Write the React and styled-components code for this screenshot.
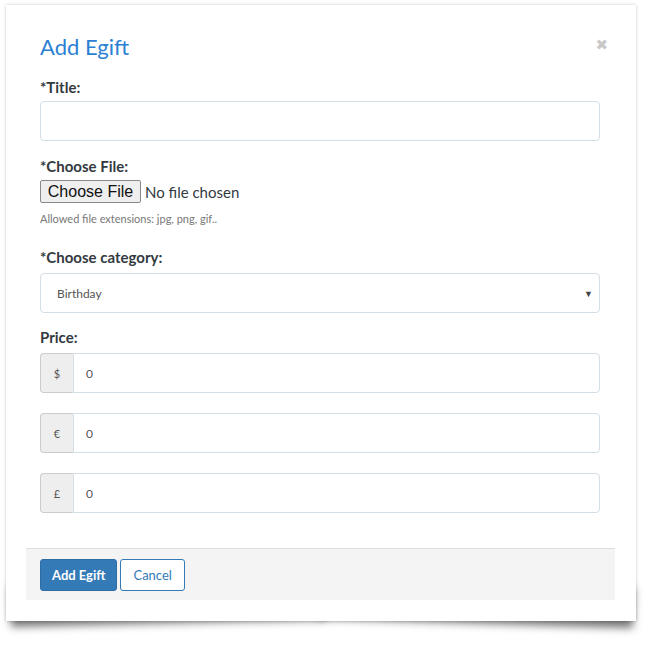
import React from "react";
import styled, { createGlobalStyle } from "styled-components";

const GlobalStyle = createGlobalStyle`
  html, body {
    margin: 0;
    padding: 0;
    background: #ffffff;
  }
  body {
    font-family: Lato, "Open Sans", "Noto Sans", sans-serif;
    color: #333a3f;
  }
  * {
    box-sizing: border-box;
  }
`;

const Page = styled.div`
  padding: 5px 0 0 6px;
  width: 650px;
  height: 651px;
  isolation: isolate;
`;

const Card = styled.div`
  position: relative;
  width: 630px;
  height: 616px;
  background: #ffffff;
  padding: 20px 21px 21px 20px;
  box-shadow: 0 0 3px rgba(0, 0, 0, 0.22);

  /* curled paper shadow under the card */
  &::before,
  &::after {
    content: "";
    position: absolute;
    z-index: -1;
    bottom: 14px;
    width: 50%;
    height: 40px;
    box-shadow: 0 16px 9px rgba(0, 0, 0, 0.55);
  }
  &::before {
    left: 4px;
    transform: rotate(-1.4deg);
  }
  &::after {
    right: 2px;
    transform: rotate(1.8deg);
  }
`;

const Dialog = styled.div`
  display: flex;
  flex-direction: column;
  height: 100%;
`;

const Header = styled.div`
  display: flex;
  justify-content: space-between;
  align-items: flex-start;
  padding: 10px 7px 0 14px;
`;

const Title = styled.h4`
  margin: 0;
  font-size: 22px;
  line-height: 24px;
  font-weight: 400;
  color: #2b80d2;
`;

const Close = styled.span`
  margin-top: 3px;
  font-family: "DejaVu Sans", sans-serif;
  font-size: 15px;
  line-height: 14px;
  font-weight: 700;
  color: #c8c8c8;
`;

const Body = styled.div`
  flex: 1;
  padding: 18px 15px 0 14px;
`;

const Group = styled.div`
  margin-bottom: ${({ $mb }) => $mb ?? 15}px;
`;

const Label = styled.label`
  display: block;
  font-size: 15px;
  line-height: 20px;
  font-weight: 700;
  color: #333a3f;
  margin-bottom: ${({ $gap }) => $gap ?? 4}px;
`;

const TextInput = styled.input`
  display: block;
  width: 100%;
  height: 40px;
  border: 1px solid #d3dfe4;
  border-radius: 4px;
  padding: 0 16px;
  font-family: inherit;
  font-size: 12px;
  color: #555;
  background: #fff;
  outline: none;
`;

const FileRow = styled.div`
  display: flex;
  align-items: center;
  gap: 4px;
  margin-top: 1px;
`;

const FileButton = styled.button`
  height: 23px;
  width: 101px;
  padding: 0;
  border: 1px solid #8a8a8a;
  border-radius: 2px;
  background: #efefef;
  font-family: "Liberation Sans", Arial, sans-serif;
  font-size: 16px;
  line-height: 21px;
  color: #111;
`;

const FileText = styled.span`
  font-size: 15px;
  color: #333a3f;
`;

const Help = styled.p`
  margin: 9px 0 0;
  font-size: 11px;
  line-height: 14px;
  color: #777;
`;

const SelectBox = styled.div`
  display: flex;
  align-items: center;
  justify-content: space-between;
  height: 40px;
  border: 1px solid #d3dfe4;
  border-radius: 4px;
  padding: 0 6px 0 16px;
  font-size: 12px;
  color: #555;
`;

const Caret = styled.span`
  font-size: 9px;
  color: #444;
  margin-top: 1px;
`;

const InputGroup = styled.div`
  display: flex;
  height: 40px;
  margin-bottom: ${({ $last }) => ($last ? 0 : 20)}px;
`;

const Addon = styled.span`
  width: 33px;
  display: flex;
  align-items: center;
  justify-content: center;
  background: #eeeeee;
  border: 1px solid #cccccc;
  border-right: none;
  border-radius: 4px 0 0 4px;
  font-size: 11px;
  color: #555;
`;

const GroupInput = styled(TextInput)`
  flex: 1;
  border-radius: 0 4px 4px 0;
  padding: 0 12px;
`;

const Footer = styled.div`
  display: flex;
  gap: 3px;
  padding: 10px 14px 9px;
  background: #f4f4f4;
  border-top: 1px solid #dddddd;
`;

const Button = styled.button`
  height: 32px;
  padding: 0 ${({ $primary }) => ($primary ? 11 : 12)}px;
  border-radius: 3px;
  font-family: inherit;
  font-size: 13px;
  font-weight: ${({ $primary }) => ($primary ? 700 : 400)};
  color: ${({ $primary }) => ($primary ? "#fff" : "#337ab7")};
  background: ${({ $primary }) => ($primary ? "#337ab7" : "#fff")};
  border: 1px solid ${({ $primary }) => ($primary ? "#2e6da4" : "#337ab7")};
`;

const prices = ["$", "€", "£"];

const App = () => {
  return (
    <Page>
      <GlobalStyle />
      <Card>
        <Dialog>
          <Header>
            <Title>Add Egift</Title>
            <Close>✖</Close>
          </Header>
          <Body>
            <Group>
              <Label>*Title:</Label>
              <TextInput type="text" defaultValue="" />
            </Group>
            <Group $mb={21}>
              <Label>*Choose File:</Label>
              <FileRow>
                <FileButton>Choose File</FileButton>
                <FileText>No file chosen</FileText>
              </FileRow>
              <Help>Allowed file extensions: jpg, png, gif..</Help>
            </Group>
            <Group $mb={14}>
              <Label $gap={6}>*Choose category:</Label>
              <SelectBox>
                <span>Birthday</span>
                <Caret>▼</Caret>
              </SelectBox>
            </Group>
            <Group>
              <Label $gap={6}>Price:</Label>
              {prices.map((cur, i) => (
                <InputGroup key={cur} $last={i === prices.length - 1}>
                  <Addon>{cur}</Addon>
                  <GroupInput type="text" defaultValue="0" />
                </InputGroup>
              ))}
            </Group>
          </Body>
          <Footer>
            <Button $primary>Add Egift</Button>
            <Button>Cancel</Button>
          </Footer>
        </Dialog>
      </Card>
    </Page>
  );
};

export default App;
